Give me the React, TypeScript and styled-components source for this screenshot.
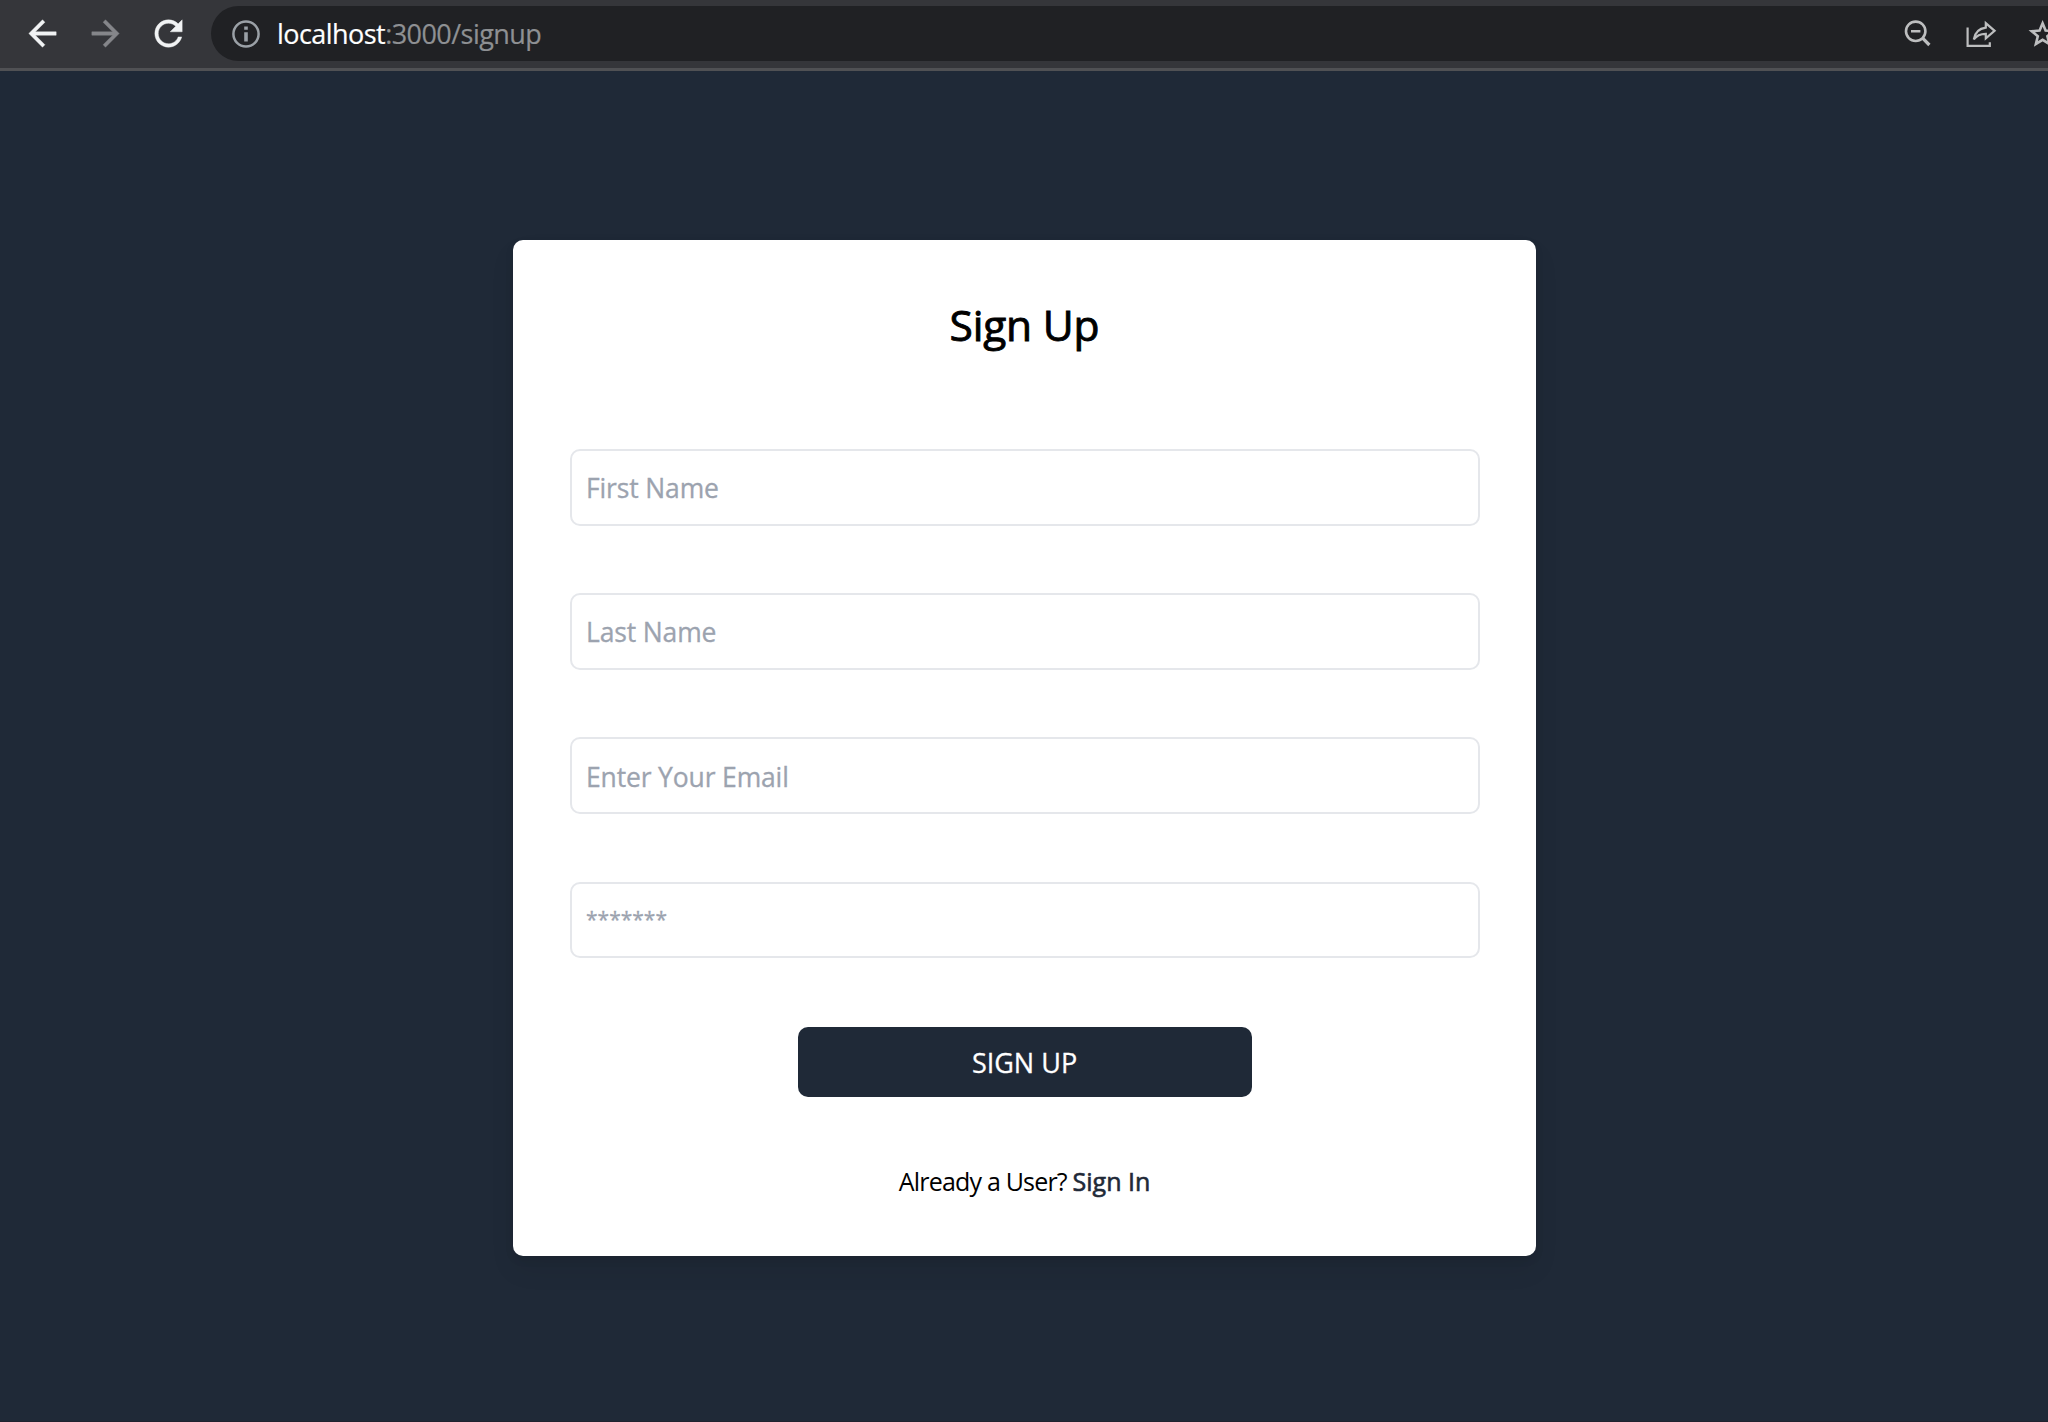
import {useState} from 'react';
import styled, {createGlobalStyle} from 'styled-components';

const GlobalStyle = createGlobalStyle`
    * {
        box-sizing: border-box;
    }
    body {
        margin: 0;
        background-color: #1f2937;
        font-family: 'Open Sans', 'Noto Sans', sans-serif;
    }
`

const Container = styled.div`
    width: 100%;
    height: 1422px;
    display: flex;
    flex-direction: column;
    overflow: hidden;
    background-color: #1f2937;
    border-bottom: 1px solid #20222f;
`

const Toolbar = styled.div`
    display: flex;
    flex-shrink: 0;
    height: 71px;
    padding: 6px 0 0 22px;
    background-color: #35363a;
    border-bottom: 3px solid #505154;
`

const NavBox = styled.div`
    display: flex;
    align-items: center;
    height: 55px;
    width: 189px;
    gap: 22px;
`

const NavIcon = styled.svg<{color: string}>`
    width: 41px;
    height: 41px;
    flex-shrink: 0;
    fill: ${({ color })=> color};
    stroke: ${({ color })=> color};
    stroke-width: 0.25;
`

const AddressBar = styled.div`
    display: flex;
    flex: 1;
    align-items: center;
    height: 55px;
    padding-left: 21px;
    border-radius: 28px 0 0 28px;
    background-color: #202124;
    overflow: hidden;
`

const Url = styled.div`
    flex: 1;
    margin-left: 17px;
    font-size: 27px;
    line-height: 55px;
    letter-spacing: -0.55px;
    color: #8e9093;
    -webkit-text-stroke: 0.2px;
`

const Host = styled.span`
    color: #ffffff;
`

const ActionBox = styled.div`
    display: flex;
    flex-shrink: 0;
    width: 144px;
    height: 55px;
`

const ActionIcon = styled.svg`
    width: 144px;
    height: 55px;
    fill: none;
    stroke: #bdbebf;
    stroke-width: 2.6;
`

const Card = styled.form`
    display: flex;
    flex-direction: column;
    align-items: center;
    align-self: center;
    width: 1023px;
    height: 1016px;
    margin: 169px 0 0 1px;
    padding: 0 57px;
    border-radius: 10px;
    background-color: #ffffff;
    box-shadow: 0 14px 26px rgba(0, 0, 0, 0.07), 0 4px 10px rgba(0, 0, 0, 0.07);
`

const Title = styled.h1`
    margin: 55px 0 94px;
    font-size: 42.5px;
    line-height: 60px;
    font-weight: 400;
    letter-spacing: -0.2px;
    color: #000000;
    -webkit-text-stroke: 0.9px #000000;
`

const Fields = styled.div`
    display: flex;
    flex-direction: column;
    gap: 67.6px;
    width: 910px;
`

const Input = styled.input`
    width: 100%;
    height: 76.6px;
    padding: 2px 14px 0 14.5px;
    border: 2px solid #e5e7eb;
    border-radius: 10px;
    outline: none;
    font-family: inherit;
    font-size: 26.5px;
    letter-spacing: -0.15px;
    background-color: #ffffff;

    &::placeholder {
        color: #9ca3af;
        opacity: 1;
        -webkit-text-stroke: 0.3px #9ca3af;
    }

    &[type='password'] {
        padding: 0 14px 2px 14.5px;
        font-size: 21px;
        letter-spacing: 0;
    }
`

const Button = styled.button`
    width: 454px;
    height: 70px;
    margin-top: 69px;
    padding: 0;
    border: none;
    border-radius: 10px;
    font-family: inherit;
    font-size: 27px;
    color: #ffffff;
    background-color: #1f2937;
    -webkit-text-stroke: 0.3px #ffffff;
`

const Footer = styled.div`
    margin-top: 65px;
    font-size: 25px;
    line-height: 38px;
    letter-spacing: -0.8px;
    color: #000000;
`

const Link = styled.a`
    letter-spacing: 0;
    color: #1f2937;
    -webkit-text-stroke: 0.6px #1f2937;
`

const fields = [
    { name: 'firstName', type: 'text', placeholder: 'First Name' },
    { name: 'lastName', type: 'text', placeholder: 'Last Name' },
    { name: 'email', type: 'email', placeholder: 'Enter Your Email' },
    { name: 'password', type: 'password', placeholder: '*******' },
];

const Browser = () =>{
    return(
        <Toolbar>
            <NavBox>
                <NavIcon viewBox="0 0 24 24" color="#f1f3f4">
                    <path d="M20 11H7.83l5.59-5.59L12 4l-8 8 8 8 1.41-1.41L7.83 13H20v-2z"/>
                </NavIcon>
                <NavIcon viewBox="0 0 24 24" color="#85868a">
                    <path d="M12 4l-1.41 1.41L16.17 11H4v2h12.17l-5.58 5.59L12 20l8-8z"/>
                </NavIcon>
                <NavIcon viewBox="0 0 24 24" color="#f1f3f4">
                    <path d="M17.65 6.35C16.2 4.9 14.21 4 12 4c-4.42 0-7.99 3.58-7.99 8s3.57 8 7.99 8c3.73 0 6.84-2.55 7.73-6h-2.08c-.82 2.33-3.04 4-5.65 4-3.31 0-6-2.69-6-6s2.69-6 6-6c1.66 0 3.14.69 4.22 1.78L13 11h7V4l-2.35 2.35z"/>
                </NavIcon>
            </NavBox>
            <AddressBar>
                <svg width="28" height="28" viewBox="0 0 28 28" fill="#9aa0a6">
                    <circle cx="14" cy="14" r="12.6" fill="none" stroke="#9aa0a6" strokeWidth="2.5"/>
                    <path d="M12.2 6.6h3.6v3.2h-3.6zM12.2 12.2h3.6v9.2h-3.6z"/>
                </svg>
                <Url><Host>localhost</Host>:3000/signup</Url>
                <ActionBox>
                    <ActionIcon viewBox="0 0 144 55">
                        <circle cx="11.7" cy="25.3" r="9.7"/>
                        <path d="M7 25.3h9.4"/>
                        <path strokeWidth="3.2" d="M18.6 32.2l6.8 6.8"/>
                        <path strokeWidth="2.2" d="M63.6 21.5v18.4h22.2v-3.6"/>
                        <path strokeWidth="2.2" d="M81.8 17.2l8.8 7.6-8.8 7.6v-4.6c-5.6 0-9.4 1.8-12 5.6 1-6.4 4.4-10.8 12-11.8z"/>
                        <path d="M138.6 17.3l3 7.3 7.8.6-6 5.1 1.9 7.6-6.7-4.1-6.7 4.1 1.9-7.6-6-5.1 7.8-.6z"/>
                    </ActionIcon>
                </ActionBox>
            </AddressBar>
        </Toolbar>
    );
};

const App = () =>{
    const [values, setValues] = useState<Record<string, string>>({});

    return(
        <Container>
            <GlobalStyle/>
            <Browser/>
            <Card>
                <Title>Sign Up</Title>
                <Fields>
                    {fields.map((field)=>(
                        <Input
                            key={field.name}
                            type={field.type}
                            placeholder={field.placeholder}
                            value={values[field.name] || ''}
                            onChange={(e)=> setValues({ ...values, [field.name]: e.target.value })}
                        />
                    ))}
                </Fields>
                <Button type="button">SIGN UP</Button>
                <Footer>Already a User? <Link>Sign In</Link></Footer>
            </Card>
        </Container>
    );
};

export default App;
